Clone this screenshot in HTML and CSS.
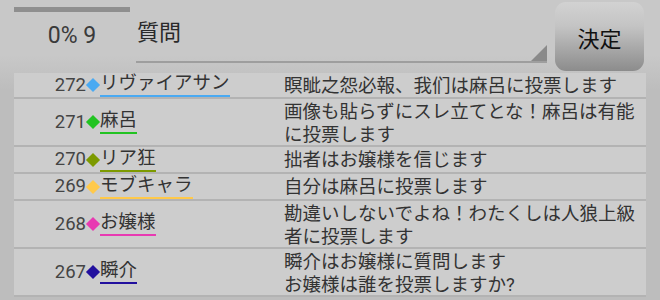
FILE: index.html
```html
<!DOCTYPE html>
<html>
<head>
<meta charset="utf-8">
<link rel="stylesheet" href="styles.css">
</head>
<body>
<div class="screen">
  <div class="header">
    <div class="status">
      <div class="progress"></div>
      <div class="count">0% 9</div>
    </div>
    <div class="question">
      <span class="qtext">質問</span>
      <span class="corner"></span>
    </div>
    <button class="submit">決定</button>
  </div>
  <div class="list">
    <div class="row first">
      <div class="who"><span class="num">272</span><span class="dia c1"></span><span class="name u1">リヴァイアサン</span></div>
      <div class="msg">瞑眦之怨必報、我们は麻呂に投票します</div>
    </div>
    <div class="row">
      <div class="who"><span class="num">271</span><span class="dia c2"></span><span class="name u2">麻呂</span></div>
      <div class="msg">画像も貼らずにスレ立てとな！麻呂は有能に投票します</div>
    </div>
    <div class="row">
      <div class="who"><span class="num">270</span><span class="dia c3"></span><span class="name u3">リア狂</span></div>
      <div class="msg">拙者はお嬢様を信じます</div>
    </div>
    <div class="row">
      <div class="who"><span class="num">269</span><span class="dia c4"></span><span class="name u4">モブキャラ</span></div>
      <div class="msg">自分は麻呂に投票します</div>
    </div>
    <div class="row">
      <div class="who"><span class="num">268</span><span class="dia c5"></span><span class="name u5">お嬢様</span></div>
      <div class="msg">勘違いしないでよね！わたくしは人狼上級者に投票します</div>
    </div>
    <div class="row">
      <div class="who"><span class="num">267</span><span class="dia c6"></span><span class="name u6">瞬介</span></div>
      <div class="msg">瞬介はお嬢様に質問します<br>お嬢様は誰を投票しますか?</div>
    </div>
  </div>
</div>
</body>
</html>
```

FILE: styles.css
```css
html, body {
  margin: 0;
  padding: 0;
}
body {
  width: 660px;
  height: 300px;
  overflow: hidden;
  background: #c7c7c7;
  font-family: Roboto, "Noto Sans CJK JP", sans-serif;
  color: #333;
}
.screen {
  display: flex;
  flex-direction: column;
  height: 300px;
  background: linear-gradient(#c8c8c8 0px, #c8c8c8 55px, #bdbdbd 90px, #bdbdbd 100%);
}
.header {
  display: flex;
  height: 73px;
  flex: none;
}
.status {
  width: 116px;
  margin-left: 14px;
  display: flex;
  flex-direction: column;
  align-items: center;
}
.progress {
  margin-top: 7px;
  height: 5px;
  width: 116px;
  background: #8f8f8f;
}
.count {
  margin-top: 11px;
  font-size: 23px;
  line-height: 26px;
  color: #3a3a3a;
}
.question {
  position: relative;
  margin-left: 6px;
  width: 411px;
  height: 61px;
  border-bottom: 2px solid #9e9e9e;
  box-sizing: content-box;
}
.qtext {
  display: block;
  margin-top: 19px;
  margin-left: 1px;
  font-size: 22px;
  line-height: 28px;
  color: #2a2a2a;
}
.corner {
  position: absolute;
  right: 0;
  bottom: 0;
  width: 0;
  height: 0;
  border-left: 16px solid transparent;
  border-bottom: 16px solid #8a8a8a;
}
.submit {
  margin: 2px 0 0 8px;
  width: 89px;
  height: 69px;
  border: none;
  border-radius: 11px;
  background: linear-gradient(#d2d2d2 0%, #c4c4c4 35%, #8c8c8c 100%);
  font-family: Roboto, "Noto Sans CJK JP", sans-serif;
  font-size: 22px;
  color: #111;
  padding: 0;
}
.list {
  margin: 0 14px;
  background: #cdcdcd;
  flex: none;
}
.row {
  display: flex;
  border-bottom: 2px solid #b3b3b3;
}
.who {
  width: 270px;
  height: 25px;
  flex: none;
  display: flex;
  align-items: center;
  align-self: center;
  font-size: 18.5px;
}
.row.first .who {
  height: 24px;
}
.num {
  width: 72px;
  text-align: right;
  color: #444;
  line-height: 21px;
}
.dia {
  width: 10px;
  height: 10px;
  margin: 0 2px 0 2px;
  transform: rotate(45deg);
}
.name {
  line-height: 21px;
  padding-bottom: 1px;
  border-bottom: 2px solid;
  color: #333;
}
.msg {
  width: 356px;
  font-size: 18.5px;
  line-height: 23px;
  padding-top: 2px;
  margin-bottom: -2px;
  color: #333;
  align-self: flex-start;
}
.c1 { background: #4aaaf2; }
.c2 { background: #22c322; }
.c3 { background: #7d9a00; }
.c4 { background: #ffc94a; }
.c5 { background: #e83ab2; }
.c6 { background: #22109e; }
.u1 { border-color: #4aaaf2; }
.u2 { border-color: #22c322; }
.u3 { border-color: #7d9a00; }
.u4 { border-color: #ffc94a; }
.u5 { border-color: #e83ab2; }
.u6 { border-color: #22109e; }
```
